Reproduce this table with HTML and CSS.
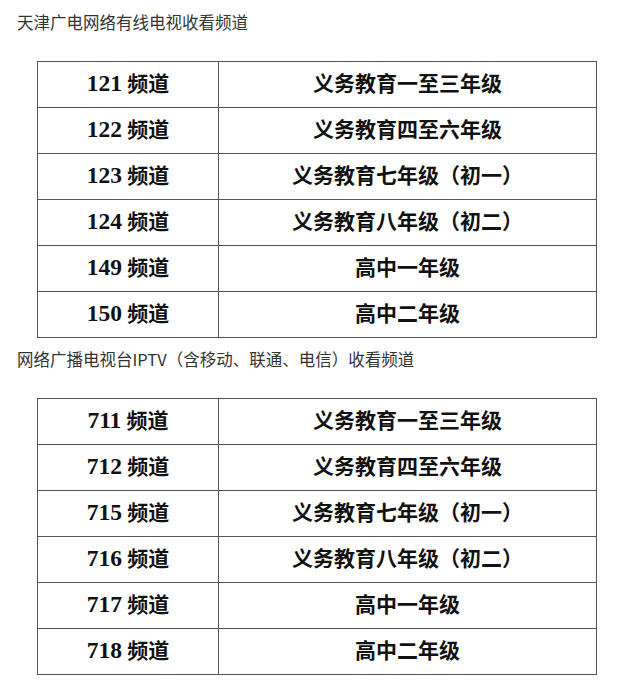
FILE: index.html
```html
<!DOCTYPE html>
<html lang="zh-CN">
<head>
<meta charset="utf-8">
<link rel="stylesheet" href="styles.css">
</head>
<body>
<p class="title">天津广电网络有线电视收看频道</p>
<table class="grid">
  <tr><td class="ch"><span class="num">121</span> 频道</td><td class="gr">义务教育一至三年级</td></tr>
  <tr><td class="ch"><span class="num">122</span> 频道</td><td class="gr">义务教育四至六年级</td></tr>
  <tr><td class="ch"><span class="num">123</span> 频道</td><td class="gr">义务教育七年级（初一）</td></tr>
  <tr><td class="ch"><span class="num">124</span> 频道</td><td class="gr">义务教育八年级（初二）</td></tr>
  <tr><td class="ch"><span class="num">149</span> 频道</td><td class="gr">高中一年级</td></tr>
  <tr><td class="ch"><span class="num">150</span> 频道</td><td class="gr">高中二年级</td></tr>
</table>
<p class="title second">网络广播电视台IPTV（含移动、联通、电信）收看频道</p>
<table class="grid">
  <tr><td class="ch"><span class="num">711</span> 频道</td><td class="gr">义务教育一至三年级</td></tr>
  <tr><td class="ch"><span class="num">712</span> 频道</td><td class="gr">义务教育四至六年级</td></tr>
  <tr><td class="ch"><span class="num">715</span> 频道</td><td class="gr">义务教育七年级（初一）</td></tr>
  <tr><td class="ch"><span class="num">716</span> 频道</td><td class="gr">义务教育八年级（初二）</td></tr>
  <tr><td class="ch"><span class="num">717</span> 频道</td><td class="gr">高中一年级</td></tr>
  <tr><td class="ch"><span class="num">718</span> 频道</td><td class="gr">高中二年级</td></tr>
</table>
</body>
</html>
```
FILE: styles.css
```css
html, body {
  margin: 0;
  background: #fff;
}
body {
  padding: 10px 17px 0;
  font-family: "Noto Sans CJK SC", "Noto Sans", sans-serif;
}
.title {
  margin: 0 0 27px;
  font-size: 16.5px;
  line-height: 24px;
  color: #333;
  white-space: nowrap;
}
.title.second {
  margin-top: 9px;
  margin-bottom: 27px;
}
.grid {
  margin-left: 20px;
  width: 560px;
  border-collapse: collapse;
  table-layout: fixed;
}
.grid td {
  height: 44px;
  padding: 0 0 1px;
  border: 1px solid #555;
  text-align: center;
  font-family: "Liberation Serif", "Noto Sans CJK SC", serif;
  font-weight: bold;
  font-size: 21px;
  color: #111;
  line-height: 1;
}
.grid td.ch {
  width: 180px;
}
.num {
  font-size: 23.5px;
}
```
